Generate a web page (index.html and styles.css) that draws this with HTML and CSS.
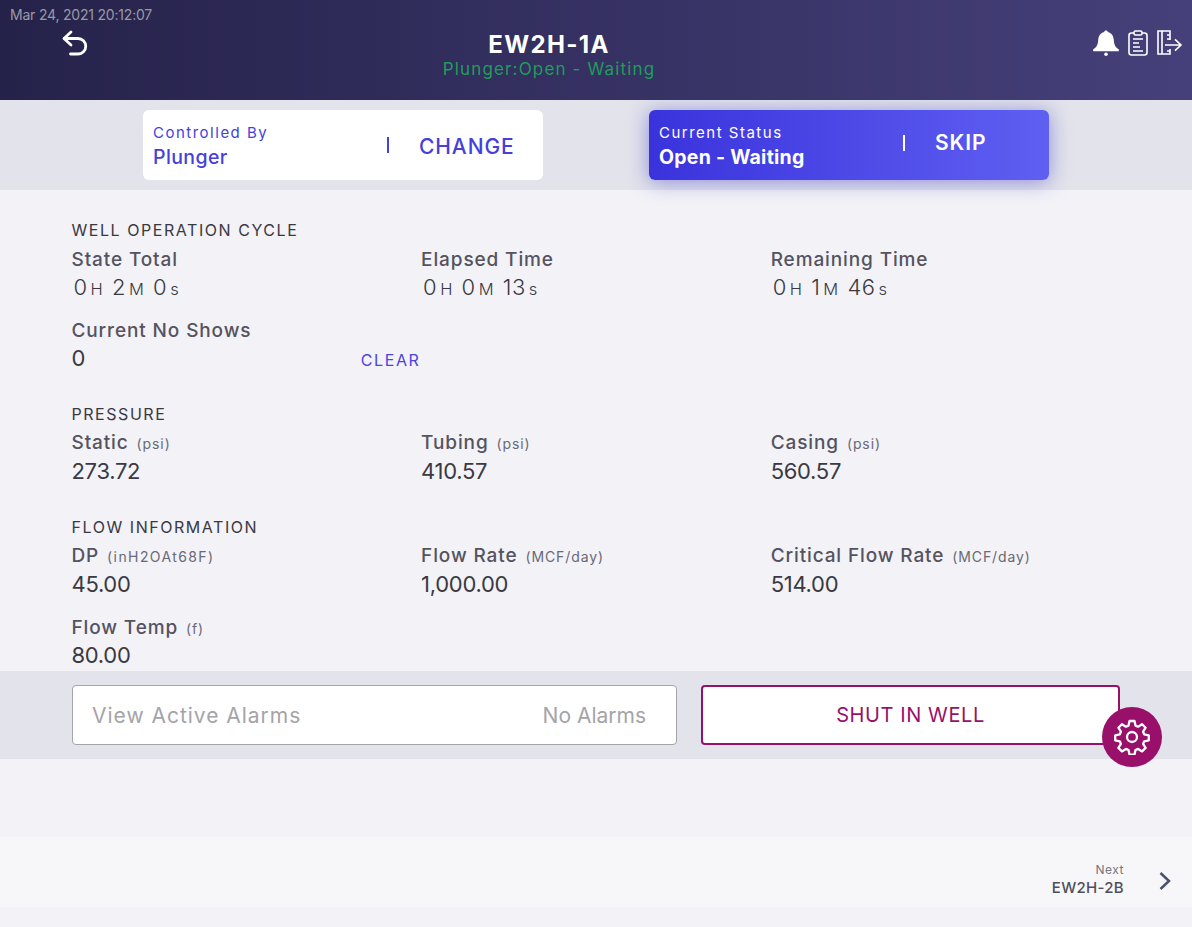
FILE: index.html
```html
<!DOCTYPE html>
<html lang="en">
<head>
<meta charset="utf-8">
<title>EW2H-1A</title>
<link rel="stylesheet" href="styles.css">
</head>
<body>
<header class="header">
  <div class="date">Mar 24, 2021 20:12:07</div>
  <svg class="back" viewBox="0 0 28 28" fill="none" stroke="#fff" stroke-width="2.8" stroke-linecap="round" stroke-linejoin="round"><path d="M10 3 3 9.500l7 6.500"/><path d="M3.500 9.500h13.500a7.500 7.500 0 0 1 0 15.500H9.500"/></svg>
  <div class="title-block">
    <div class="title">EW2H-1A</div>
    <div class="subtitle">Plunger:Open - Waiting</div>
  </div>
  <div class="header-icons">
    <svg class="ic-bell" viewBox="0 0 26 26" fill="#fff"><path d="M13 .5c1 0 1.700.6 1.800 1.400 4.200 1 5.700 4.200 6 8.100.3 4.700 1.600 7.400 5 9.200v2H.2v-2c3.400-1.800 4.700-4.500 5-9.200.3-3.900 1.800-7.100 6-8.100C11.300 1.100 12 .5 13 .5z"/><circle cx="13" cy="24.200" r="1.800"/></svg>
    <svg class="ic-clip" viewBox="0 0 20 26" fill="none" stroke="#fff" stroke-width="1.600"><rect x="1" y="3" width="18" height="22" rx="2.500"/><rect x="6" y="1" width="8" height="4" rx="1.500" fill="#433c72"/><path d="M5 9h10M5 13h6M5 17h7M5 21h10"/></svg>
    <svg class="ic-exit" viewBox="0 0 26 26" fill="none" stroke="#fff" stroke-width="1.600"><path d="M13 10V1H1v23h12v-5"/><path d="M5 1v23M10 5h3M10 9h3M10 21h3"/><path d="M8 15h16M18 9.300l6 5.700-6 5.700"/></svg>
  </div>
</header>

<section class="status-bar">
  <div class="status-card card-light">
    <div class="card-text"><div class="card-label">Controlled By</div><div class="card-value">Plunger</div></div>
    <div class="card-sep"></div>
    <div class="card-action">CHANGE</div>
  </div>
  <div class="status-card card-blue">
    <div class="card-text"><div class="card-label">Current Status</div><div class="card-value">Open - Waiting</div></div>
    <div class="card-sep"></div>
    <div class="card-action">SKIP</div>
  </div>
</section>

<main class="content">
  <h2 class="section-title">WELL OPERATION CYCLE</h2>
  <div class="grid grid-first">
    <div class="cell"><div class="label">State Total</div><div class="value time">0<small>H</small> 2<small>M</small> 0<small>s</small></div></div>
    <div class="cell"><div class="label">Elapsed Time</div><div class="value time">0<small>H</small> 0<small>M</small> 13<small>s</small></div></div>
    <div class="cell"><div class="label">Remaining Time</div><div class="value time">0<small>H</small> 1<small>M</small> 46<small>s</small></div></div>
    <div class="cell cell-clear"><div><div class="label">Current No Shows</div><div class="value">0</div></div><div class="clear">CLEAR</div></div>
  </div>

  <h2 class="section-title mt-pressure">PRESSURE</h2>
  <div class="grid">
    <div class="cell"><div class="label">Static <span class="unit">(psi)</span></div><div class="value">273.72</div></div>
    <div class="cell"><div class="label">Tubing <span class="unit">(psi)</span></div><div class="value">410.57</div></div>
    <div class="cell"><div class="label">Casing <span class="unit">(psi)</span></div><div class="value">560.57</div></div>
  </div>

  <h2 class="section-title mt-flow">FLOW INFORMATION</h2>
  <div class="grid grid-flow">
    <div class="cell"><div class="label">DP <span class="unit unit-wide">(inH2OAt68F)</span></div><div class="value">45.00</div></div>
    <div class="cell"><div class="label">Flow Rate <span class="unit">(MCF/day)</span></div><div class="value">1,000.00</div></div>
    <div class="cell"><div class="label">Critical Flow Rate <span class="unit">(MCF/day)</span></div><div class="value">514.00</div></div>
    <div class="cell"><div class="label">Flow Temp <span class="unit">(f)</span></div><div class="value value-tight">80.00</div></div>
  </div>
</main>

<section class="alarm-bar">
  <div class="alarm-box"><span class="alarm-main">View Active Alarms</span><span>No Alarms</span></div>
  <div class="shut-btn">SHUT IN WELL</div>
  <div class="fab">
    <svg viewBox="0 0 36 36" fill="none" stroke="#fff" stroke-width="2.300" stroke-linejoin="round"><circle cx="18" cy="18" r="5"/><path d="M15.500 2h5l1 4.600 2.600 1.100 4-2.500 3.500 3.500-2.500 4 1.100 2.600 4.600 1v5l-4.600 1-1.100 2.600 2.500 4-3.500 3.500-4-2.500-2.600 1.100-1 4.600h-5l-1-4.600-2.600-1.100-4 2.500-3.500-3.500 2.500-4-1.100-2.600-4.600-1v-5l4.600-1 1.100-2.600-2.500-4 3.500-3.500 4 2.500 2.600-1.100z"/></svg>
  </div>
</section>

<section class="next-bar">
  <div class="next-text"><div class="next-label">Next</div><div class="next-name">EW2H-2B</div></div>
  <svg class="chev" viewBox="0 0 12 20" fill="none" stroke="#4a5070" stroke-width="2.500"><path d="M1.500 2l8.500 8-8.500 8"/></svg>
</section>
</body>
</html>
```

FILE: styles.css
```css
* { box-sizing: border-box; }
html, body { margin: 0; padding: 0; }
body {
  width: 1192px;
  height: 927px;
  overflow: hidden;
  background: #f2f2f7;
  font-family: Inter, "Liberation Sans", sans-serif;
  color: #33323c;
}
.header {
  position: relative;
  height: 100px;
  background: linear-gradient(90deg, #25224a 0%, #46407a 100%);
  display: flex;
  justify-content: center;
  padding-right: 94px;
}
.date {
  position: absolute;
  left: 10px;
  top: 6px;
  font-size: 14px;
  line-height: 18px;
  letter-spacing: -.2px;
  color: #9a9aa6;
}
.back {
  position: absolute;
  left: 61px;
  top: 29px;
  width: 28px;
  height: 28px;
}
.title-block { text-align: center; padding-top: 30px; }
.title { font-size: 24px; line-height: 30px; font-weight: 700; color: #fff; letter-spacing: 1.35px; }
.subtitle { font-size: 17px; line-height: 21px; color: #1f9d5c; letter-spacing: 1.15px; margin-top: -1px; }
.header-icons {
  position: absolute;
  right: 9px;
  top: 30px;
  display: flex;
  align-items: center;
  gap: 9px;
}
.ic-bell { width: 26px; height: 26px; }
.ic-clip { width: 20px; height: 26px; }
.ic-exit { width: 26px; height: 26px; }

.status-bar {
  height: 90px;
  background: #e2e3eb;
  display: flex;
  padding: 10px 0 0 143px;
  gap: 106px;
}
.status-card {
  width: 400px;
  height: 70px;
  border-radius: 6px;
  display: flex;
  align-items: center;
  padding-left: 10px;
}
.card-light { background: #fff; color: #453fdc; }
.card-blue {
  background: linear-gradient(90deg, #3a33dc 0%, #5f5ff2 100%);
  color: #fff;
  box-shadow: 0 2px 20px rgba(60, 55, 200, .5);
}
.card-text { width: 234px; padding-top: 5px; }
.card-label { font-size: 15px; line-height: 20px; letter-spacing: 1.5px; }
.card-value { font-size: 19.5px; line-height: 29px; font-weight: 500; letter-spacing: .4px; }
.card-blue .card-value { font-weight: 700; letter-spacing: .25px; }
.card-sep { width: 2px; height: 16px; background: currentColor; }
.card-action { font-size: 21px; font-weight: 500; letter-spacing: .9px; margin-left: 30px; padding-top: 2px; }
.card-blue .card-action { font-weight: 600; padding-top: 0; margin-top: -5px; }
.card-blue .card-sep { margin-left: 10px; margin-top: -5px; }

.content { height: 481px; padding: 28px 0 0 71.5px; }
.section-title {
  margin: 0 0 5px;
  font-size: 16px;
  line-height: 24px;
  font-weight: 400;
  letter-spacing: 1.55px;
  color: #3a3942;
}
.mt-pressure { margin-top: 29px; }
.mt-flow { margin-top: 29px; }
.grid { display: grid; grid-template-columns: repeat(3, 349.6px); row-gap: 15px; }
.grid-first { margin-top: 6px; }
.grid-flow { row-gap: 17px; }
.cell { min-width: 0; }
.label { font-size: 19px; line-height: 24px; font-weight: 500; letter-spacing: .88px; color: #55535f; white-space: nowrap; }
.unit { font-size: 14px; font-weight: 400; letter-spacing: .9px; color: #6a6975; margin-left: 2px; }
.unit-wide { letter-spacing: 1.4px; }
.value { font-size: 22px; line-height: 30px; letter-spacing: -.3px; color: #3a3942; }
.value-tight { margin-top: -1px; }
.time { font-weight: 300; letter-spacing: .5px; padding-left: 2px; word-spacing: 2px; }
.time small { font-size: 16.5px; margin-left: 3px; }
.cell-clear { display: flex; justify-content: space-between; align-items: flex-end; width: 349px; }
.clear { font-size: 16px; line-height: 24px; letter-spacing: 1.6px; color: #4b44e0; margin-bottom: 1px; }

.alarm-bar {
  position: relative;
  height: 88px;
  background: #e2e3eb;
  display: flex;
  padding: 14px 0 0 72px;
  gap: 24px;
}
.alarm-box {
  width: 605px;
  height: 60px;
  background: #fff;
  border: 1px solid #a3a3aa;
  border-radius: 4px;
  display: flex;
  justify-content: space-between;
  align-items: center;
  padding: 0 30px 0 19px;
  font-size: 21px;
  color: #a4a4a8;
}
.alarm-main { letter-spacing: .98px; }
.shut-btn {
  width: 419px;
  height: 60px;
  background: #fff;
  border: 2px solid #98106a;
  border-radius: 4px;
  display: flex;
  justify-content: center;
  align-items: center;
  font-size: 20px;
  letter-spacing: .6px;
  color: #98106a;
}
.fab {
  position: absolute;
  left: 1102px;
  top: 36px;
  width: 60px;
  height: 60px;
  border-radius: 50%;
  background: #98106a;
  display: flex;
  align-items: center;
  justify-content: center;
}
.fab svg { width: 36px; height: 36px; }

.next-bar {
  height: 70px;
  margin-top: 78px;
  background: #f7f7fa;
  display: flex;
  justify-content: flex-end;
  align-items: center;
  padding-right: 21px;
}
.next-text { text-align: right; margin-right: 35px; padding-top: 15px; }
.next-label { font-size: 12px; line-height: 16px; letter-spacing: .5px; color: #75757f; }
.next-name { font-size: 15px; line-height: 20px; font-weight: 500; letter-spacing: .3px; color: #4f4e5c; }
.chev { width: 12px; height: 20px; margin-top: 18px; }
```
